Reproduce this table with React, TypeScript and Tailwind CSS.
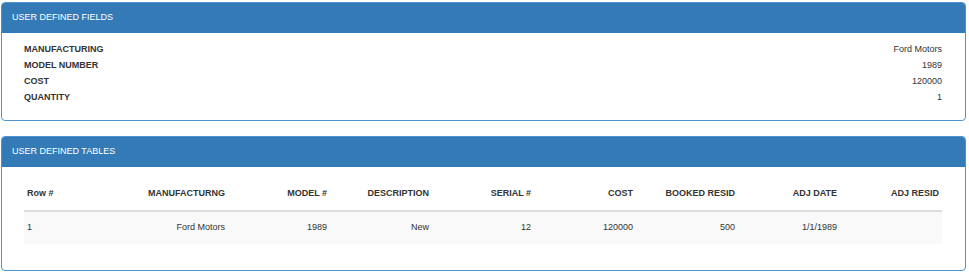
import React from 'react';

const fields = [
  { label: 'MANUFACTURING', value: 'Ford Motors' },
  { label: 'MODEL NUMBER', value: '1989' },
  { label: 'COST', value: '120000' },
  { label: 'QUANTITY', value: '1' },
];

const columns = ['Row #', 'MANUFACTURNG', 'MODEL #', 'DESCRIPTION', 'SERIAL #', 'COST', 'BOOKED RESID', 'ADJ DATE', 'ADJ RESID'];

const rows = [['1', 'Ford Motors', '1989', 'New', '12', '120000', '500', '1/1/1989', '']];

function Panel({ title, children }: any) {
  return (
    <section className="border border-[#4f94d2] rounded-[4px] bg-white overflow-hidden">
      <div className="h-[30px] bg-[#337ab7] flex items-center pl-[10px] text-white text-[9px]">{title}</div>
      {children}
    </section>
  );
}

export default function App() {
  return (
    <div className="w-[969px] h-[275px] bg-white pt-[2px] pl-[1px] pr-[3px] font-['Liberation_Sans',Arial,sans-serif] text-[#333]">
      <Panel title="USER DEFINED FIELDS">
        <div className="pt-[9px] pb-[14px] pl-[22px] pr-[23px]">
          {fields.map((f) => (
            <div key={f.label} className="flex justify-between items-center h-4 text-[9px]">
              <span className="font-bold">{f.label}</span>
              <span>{f.value}</span>
            </div>
          ))}
        </div>
      </Panel>

      <div className="h-[15px]" />

      <Panel title="USER DEFINED TABLES">
        <div className="pt-[11px] pb-[26px] pl-[22px] pr-[23px] text-[9px]">
          {/* header row */}
          <div className="grid grid-cols-9 h-[34px] border-b-2 border-[#dddddd] font-bold">
            {columns.map((c, i) => (
              <div key={c} className={`flex items-center px-[3px] ${i === 0 ? 'justify-start' : 'justify-end'}`}>{c}</div>
            ))}
          </div>
          {rows.map((r, ri) => (
            <div key={ri} className="grid grid-cols-9 h-8 bg-[#f9f9f9]">
              {r.map((v, i) => (
                <div key={i} className={`flex items-center px-[3px] ${i === 0 ? 'justify-start' : 'justify-end'}`}>{v}</div>
              ))}
            </div>
          ))}
        </div>
      </Panel>
    </div>
  );
}
